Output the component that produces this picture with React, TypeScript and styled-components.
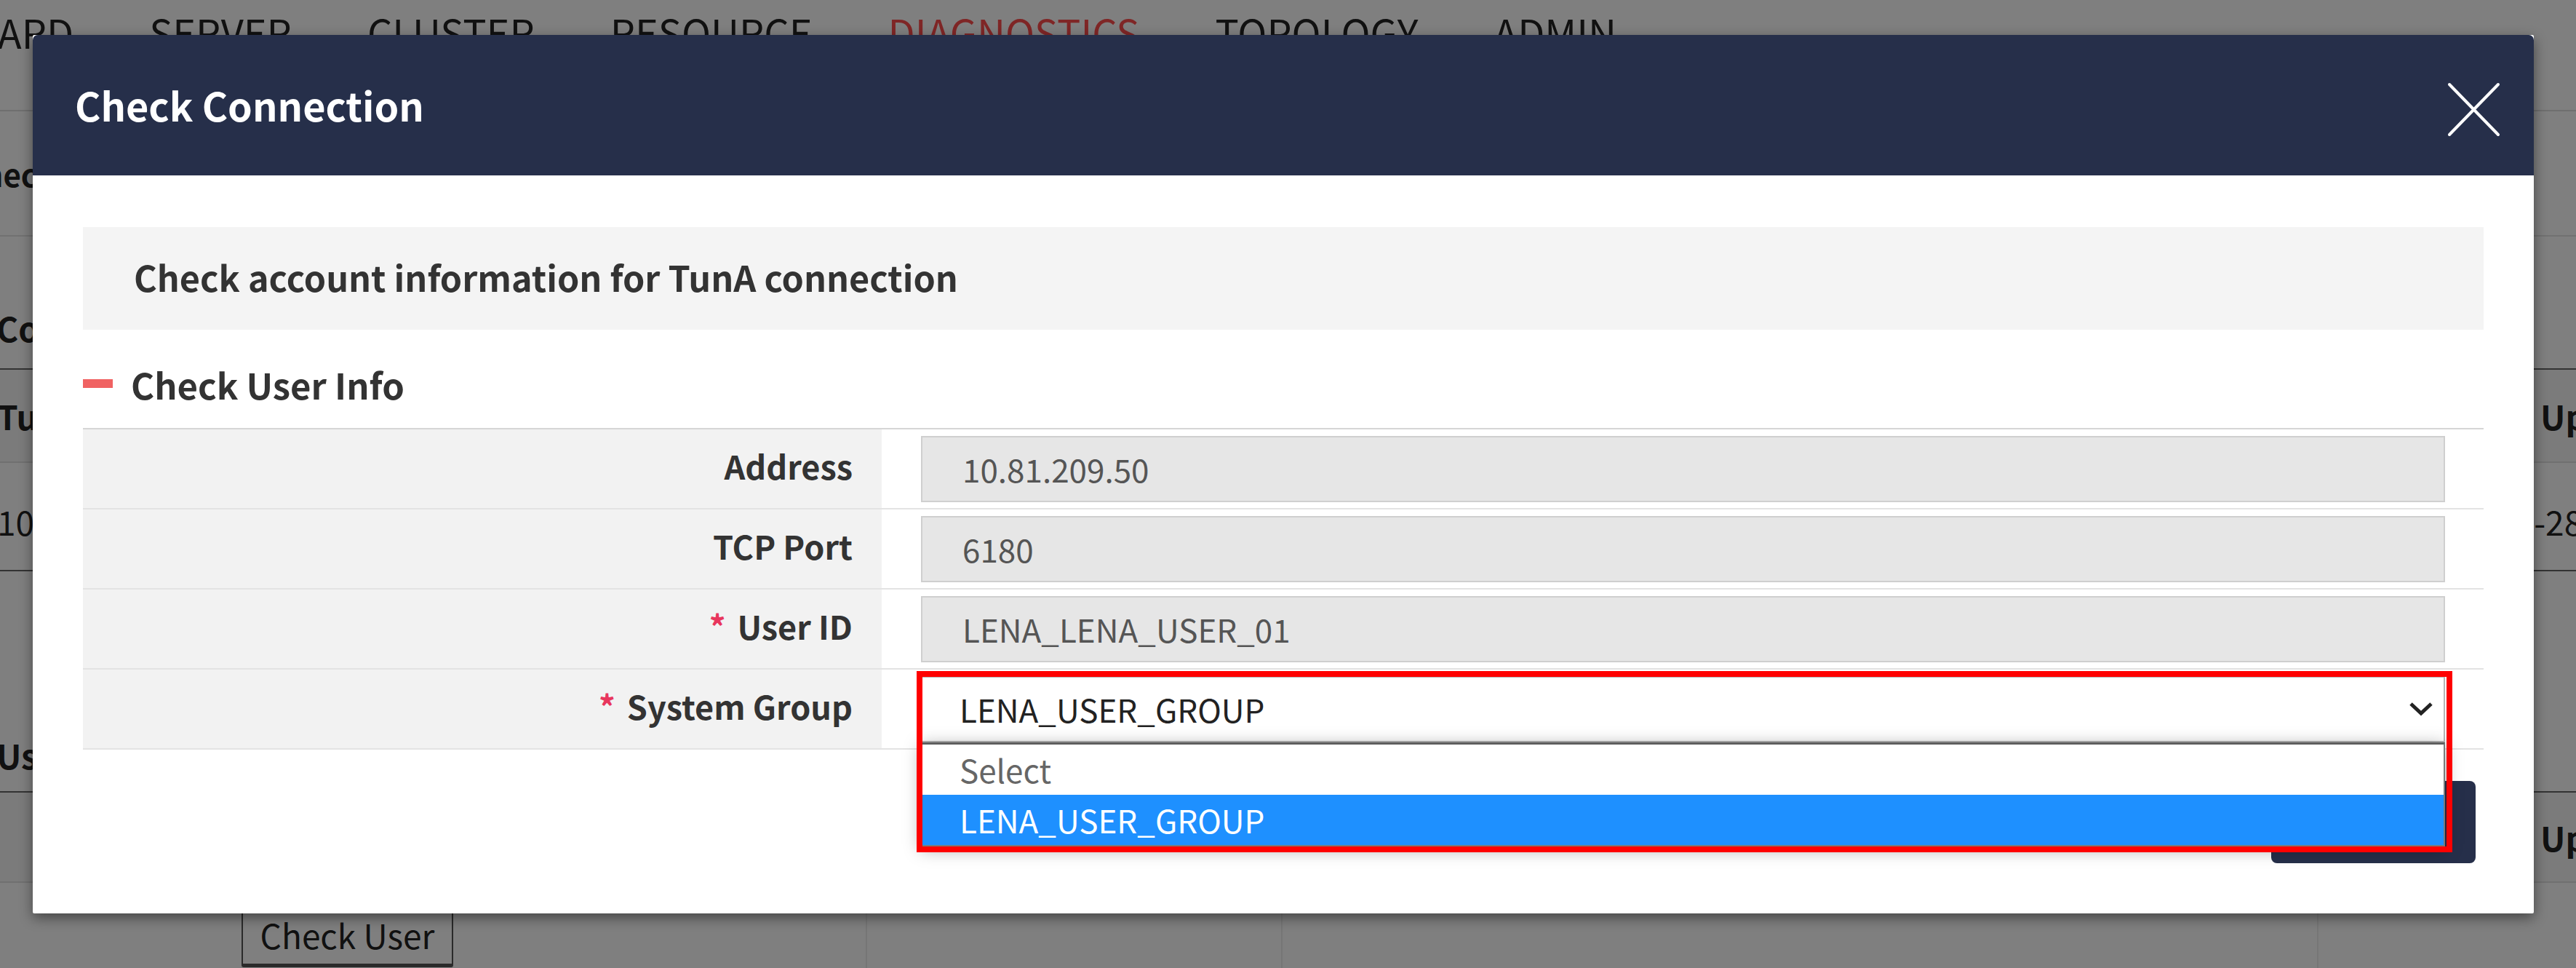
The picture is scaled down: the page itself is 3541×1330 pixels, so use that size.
import React from 'react'
import styled, { createGlobalStyle } from 'styled-components'

const FONT = `"Noto Sans CJK KR", "Noto Sans", sans-serif`

const GlobalStyle = createGlobalStyle`
    html, body {
        margin: 0;
        padding: 0;
    }
    body {
        width: 3541px;
        height: 1330px;
        overflow: hidden;
        background: #fff;
        font-family: ${FONT};
        color: #222;
    }
    * {
        box-sizing: border-box;
    }
`

/* ---------- page behind the dialog ---------- */

const Screen = styled.div`
    position: relative;
    width: 3541px;
    height: 1330px;
    overflow: hidden;
    background: #fff;
`
const Page = styled.div`
    display: flex;
    flex-direction: column;
`
const Nav = styled.nav`
    height: 153px;
    border-bottom: 2px solid #dedede;
    display: flex;
    gap: 104px;
    padding-top: 4px;
`
const NavItem = styled.div<{ $active?: boolean }>`
    font-size: 54px;
    color: ${p => p.$active ? '#ff4d4d' : '#222'};
    white-space: nowrap;
    &:first-child {
        margin-left: -219px;
    }
`
const PageTitle = styled.div`
    height: 172px;
    border-bottom: 2px solid #e2e2e2;
    display: flex;
    align-items: center;
    font-size: 42px;
    font-weight: 700;
    white-space: nowrap;
    & > span {
        margin-left: -50px;
    }
`
const PageSection = styled.h4<{ $top: number, $bottom: number }>`
    margin: 0;
    padding: ${p => p.$top}px 0 ${p => p.$bottom}px;
    line-height: 70px;
    font-size: 46px;
    font-weight: 700;
    text-indent: -5px;
    white-space: nowrap;
`
const GridTable = styled.div`
    border-top: 2px solid #666;
`
const GridRow = styled.div<{ $h: number, $cols: string, $head?: boolean, $last?: boolean }>`
    display: grid;
    grid-template-columns: ${p => p.$cols};
    height: ${p => p.$h}px;
    padding-top: ${p => p.$head ? 0 : 12}px;
    background: ${p => p.$head ? '#f7f7f7' : '#fff'};
    border-bottom: 2px solid ${p => p.$last ? '#666' : '#e0e0e0'};
    font-size: 46px;
    font-weight: ${p => p.$head ? 700 : 400};
    white-space: nowrap;
    overflow: hidden;
`
const GridCell = styled.div<{ $pad?: number }>`
    padding-left: ${p => p.$pad ?? 0}px;
    text-indent: -4px;
    display: flex;
    align-items: center;
`
const UserRow = styled.div`
    display: grid;
    grid-template-columns: 1190px 571px 1424px 1fr;
    height: 140px;
`
const UserCell = styled.div<{ $line?: boolean }>`
    border-left: ${p => p.$line ? '2px solid #ececec' : 'none'};
    padding-top: 29px;
`
const GhostButton = styled.button`
    margin-left: 332px;
    width: 291px;
    height: 87px;
    border: 2px solid #555;
    border-bottom-width: 5px;
    border-radius: 3px;
    background: #fff;
    font-family: ${FONT};
    font-size: 46px;
    color: #222;
    padding: 0;
`
const Dim = styled.div`
    position: absolute;
    inset: 0;
    background: rgba(0, 0, 0, 0.5);
`

/* ---------- dialog ---------- */

const Modal = styled.section`
    position: absolute;
    left: 45px;
    top: 48px;
    width: 3438px;
    background: #fff;
    border-radius: 2px;
    box-shadow: 0 6px 18px rgba(0, 0, 0, 0.45);
`
const ModalHeader = styled.header`
    height: 193px;
    background: #262f4a;
    border-radius: 7px 7px 0 0;
    display: flex;
    align-items: center;
    justify-content: space-between;
    padding: 0 46px 0 58px;
`
const ModalTitle = styled.h2`
    margin: 0;
    color: #fff;
    font-size: 54px;
    font-weight: 700;
    padding-bottom: 2px;
`
const CloseButton = styled.button`
    width: 73px;
    height: 75px;
    margin-top: 12px;
    padding: 0;
    border: 0;
    background: none;
    display: flex;
`
const ModalBody = styled.div`
    padding: 71px 69px 69px;
`
const Notice = styled.div`
    height: 141px;
    background: #f4f4f4;
    display: flex;
    align-items: center;
    padding: 0 0 5px 70px;
    font-size: 48.5px;
    font-weight: 700;
    color: #333;
`
const SectionHeading = styled.h3`
    display: flex;
    align-items: center;
    gap: 25px;
    height: 70px;
    margin: 39px 0 26px;
    font-size: 49px;
    font-weight: 700;
    color: #333;
    &::before {
        content: '';
        width: 41px;
        height: 12px;
        background: #f06262;
    }
`
const FormTable = styled.div`
    border-top: 2px solid #d6d6d6;
`
const FormRow = styled.div`
    display: flex;
    height: 110px;
    border-bottom: 2px solid #e3e3e3;
`
const FormLabel = styled.div`
    width: 1098px;
    flex: none;
    background: #f2f2f2;
    display: flex;
    align-items: center;
    justify-content: flex-end;
    padding: 0 40px 10px 0;
    font-size: 45px;
    font-weight: 700;
    color: #333;
`
const Required = styled.span`
    color: #e8365d;
    margin-right: 16px;
`
const FormValue = styled.div`
    flex: 1;
    display: flex;
    align-items: center;
    padding: 0 53px 0 54px;
`
const TextInput = styled.input`
    width: 100%;
    height: 91px;
    border: 2px solid #cfcfcf;
    background: #e6e6e6;
    padding: 0 0 0 55px;
    font-family: ${FONT};
    font-size: 44px;
    color: #555;
    outline: none;
`
const SelectBox = styled.div`
    position: relative;
    width: 100%;
    height: 91px;
    border: 2px solid #b5b5b5;
    background: #fff;
    display: flex;
    align-items: center;
    justify-content: space-between;
    padding: 0 14px 0 51px;
    font-size: 44px;
    color: #222;
`
const OptionList = styled.ul`
    position: absolute;
    z-index: 2;
    top: 89px;
    left: -2px;
    right: -2px;
    margin: 0;
    padding: 0;
    list-style: none;
    background: #fff;
    border: 2px solid #7a7a7a;
    border-top: 3px solid #5e5e5e;
    box-shadow: 0 4px 22px rgba(0, 0, 0, 0.35);
`
const Option = styled.li<{ $selected?: boolean }>`
    height: 69px;
    display: flex;
    align-items: center;
    padding-left: 51px;
    background: ${p => p.$selected ? '#1e90ff' : '#fff'};
    color: ${p => p.$selected ? '#fff' : '#666'};
`
const Highlight = styled.div`
    position: absolute;
    z-index: 3;
    left: -8px;
    top: -9px;
    width: 2111px;
    height: 249px;
    border: 8px solid #ff0000;
    pointer-events: none;
`
const ModalFooter = styled.div`
    display: flex;
    justify-content: flex-end;
    margin-top: 43px;
    padding-right: 11px;
`
const PrimaryButton = styled.button`
    width: 281px;
    height: 113px;
    border: 0;
    border-radius: 8px;
    background: #262f4a;
    color: #fff;
    font-family: ${FONT};
    font-size: 46px;
    font-weight: 700;
`

const navItems = ['DASHBOARD', 'SERVER', 'CLUSTER', 'RESOURCE', 'DIAGNOSTICS', 'TOPOLOGY', 'ADMIN']

const fields = [
    { label: 'Address', value: '10.81.209.50' },
    { label: 'TCP Port', value: '6180' },
    { label: 'User ID', value: 'LENA_LENA_USER_01', required: true },
]

const CloseIcon = () => (
    <svg width="73" height="75" viewBox="0 0 73 75">
        <path d="M3 3 L70 72 M70 3 L3 72" stroke="#fff" strokeWidth="4" strokeLinecap="round" fill="none" />
    </svg>
)

const Chevron = () => (
    <svg width="34" height="20" viewBox="0 0 34 20">
        <path d="M3 3 L17 16 L31 3" stroke="#222" strokeWidth="5" fill="none" />
    </svg>
)

export default function App() {
    return (
        <Screen>
            <GlobalStyle />
            <Page>
                <Nav>
                    {navItems.map(n => <NavItem key={n} $active={n === 'DIAGNOSTICS'}>{n}</NavItem>)}
                </Nav>
                <PageTitle><span>Check</span></PageTitle>
                <PageSection $top={90} $bottom={21}>Connection Info</PageSection>
                <GridTable>
                    <GridRow $h={128} $cols="3496px 1fr" $head>
                        <GridCell>TunA</GridCell>
                        <GridCell>Update Date</GridCell>
                    </GridRow>
                    <GridRow $h={149} $cols="3318px 1fr" $last>
                        <GridCell>10.81.209.50</GridCell>
                        <GridCell>2024-05-28 14:22:10</GridCell>
                    </GridRow>
                </GridTable>
                <PageSection $top={217} $bottom={15}>User Info</PageSection>
                <GridTable>
                    <GridRow $h={124} $cols="3185px 1fr" $head>
                        <GridCell />
                        <GridCell $pad={311}>Update Date</GridCell>
                    </GridRow>
                    <UserRow>
                        <UserCell><GhostButton>Check User</GhostButton></UserCell>
                        <UserCell $line />
                        <UserCell $line />
                        <UserCell $line />
                    </UserRow>
                </GridTable>
            </Page>

            <Dim />

            <Modal>
                <ModalHeader>
                    <ModalTitle>Check Connection</ModalTitle>
                    <CloseButton aria-label="close"><CloseIcon /></CloseButton>
                </ModalHeader>
                <ModalBody>
                    <Notice>Check account information for TunA connection</Notice>
                    <SectionHeading>Check User Info</SectionHeading>
                    <FormTable>
                        {fields.map(f => (
                            <FormRow key={f.label}>
                                <FormLabel>
                                    {f.required && <Required>*</Required>}
                                    {f.label}
                                </FormLabel>
                                <FormValue>
                                    <TextInput readOnly value={f.value} />
                                </FormValue>
                            </FormRow>
                        ))}
                        <FormRow>
                            <FormLabel><Required>*</Required>System Group</FormLabel>
                            <FormValue>
                                <SelectBox>
                                    <span>LENA_USER_GROUP</span>
                                    <Chevron />
                                    <OptionList>
                                        <Option>Select</Option>
                                        <Option $selected>LENA_USER_GROUP</Option>
                                    </OptionList>
                                    <Highlight />
                                </SelectBox>
                            </FormValue>
                        </FormRow>
                    </FormTable>
                    <ModalFooter>
                        <PrimaryButton>Check</PrimaryButton>
                    </ModalFooter>
                </ModalBody>
            </Modal>
        </Screen>
    )
}
